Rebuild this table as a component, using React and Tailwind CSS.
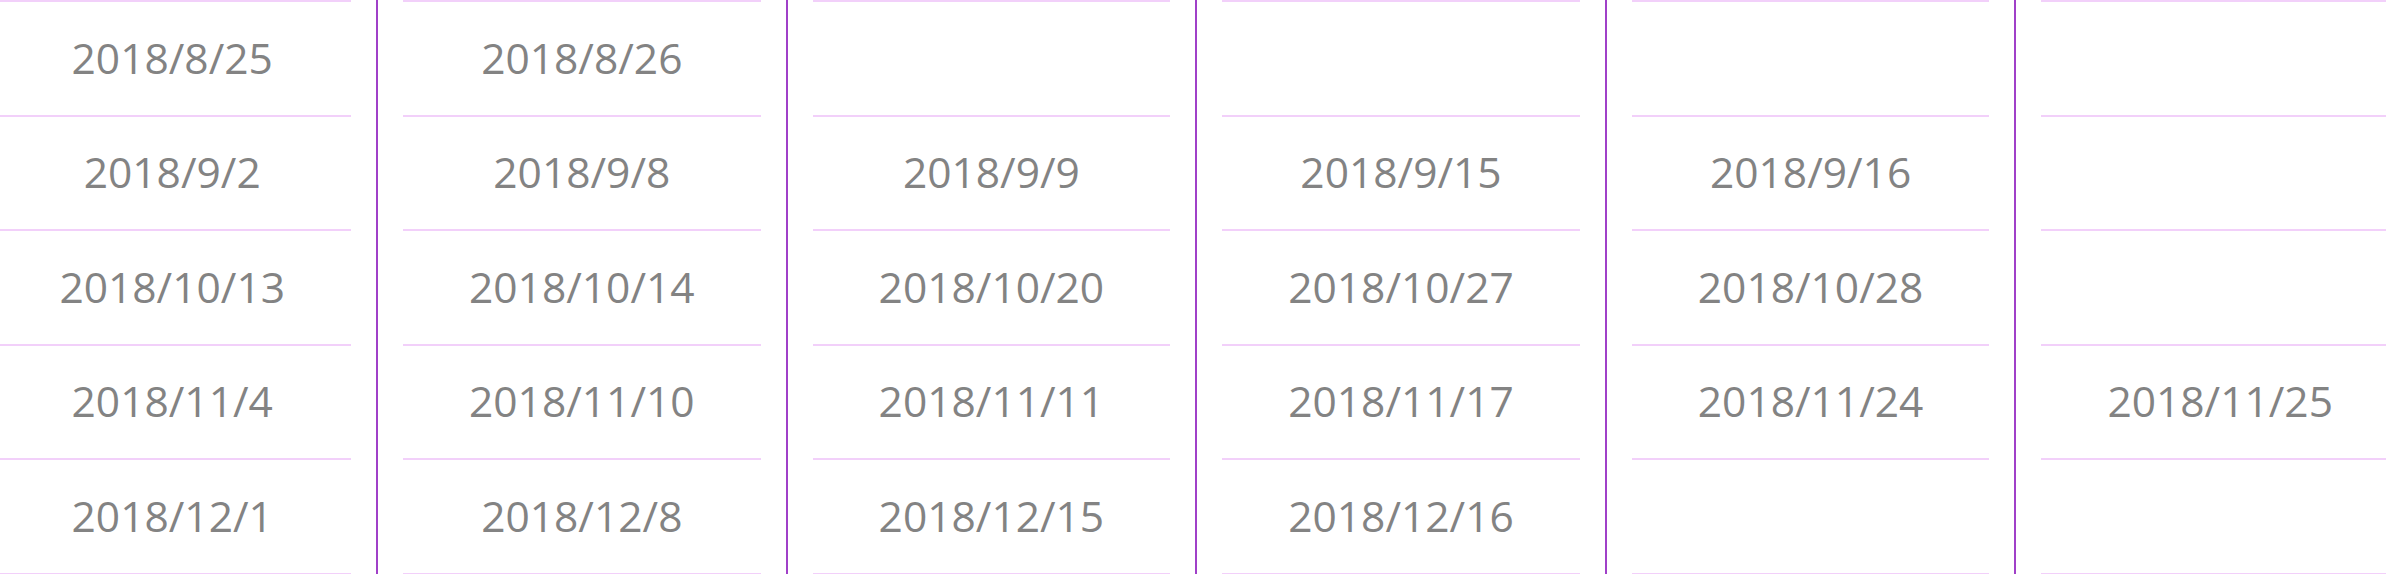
import React from "react";

const columns = [
  ["2018/8/25", "2018/9/2", "2018/10/13", "2018/11/4", "2018/12/1"],
  ["2018/8/26", "2018/9/8", "2018/10/14", "2018/11/10", "2018/12/8"],
  ["", "2018/9/9", "2018/10/20", "2018/11/11", "2018/12/15"],
  ["", "2018/9/15", "2018/10/27", "2018/11/17", "2018/12/16"],
  ["", "2018/9/16", "2018/10/28", "2018/11/24", ""],
  ["", "", "", "2018/11/25", ""],
];

export default function App() {
  return (
    <div className="w-full h-[574px] overflow-hidden bg-white">
      <div className="flex ml-[-31.6px] h-[574px]">
        {columns.map((col, ci) => (
          <div
            key={ci}
            className="w-[409.6px] shrink-0 border-r-2 border-[#a040c8] px-[25px] h-[574px]"
          >
            <div className="flex flex-col border-b-2 border-[#f2d0fa]">
              {col.map((d, ri) => (
                <div
                  key={ri}
                  className="h-[114.5px] border-t-2 border-[#f2d0fa] flex items-center justify-center pb-[1px] text-[42.5px] text-[#838383] leading-none"
                  style={{ fontFamily: '"Open Sans", "Noto Sans", sans-serif' }}
                >
                  {d}
                </div>
              ))}
            </div>
          </div>
        ))}
      </div>
    </div>
  );
}
